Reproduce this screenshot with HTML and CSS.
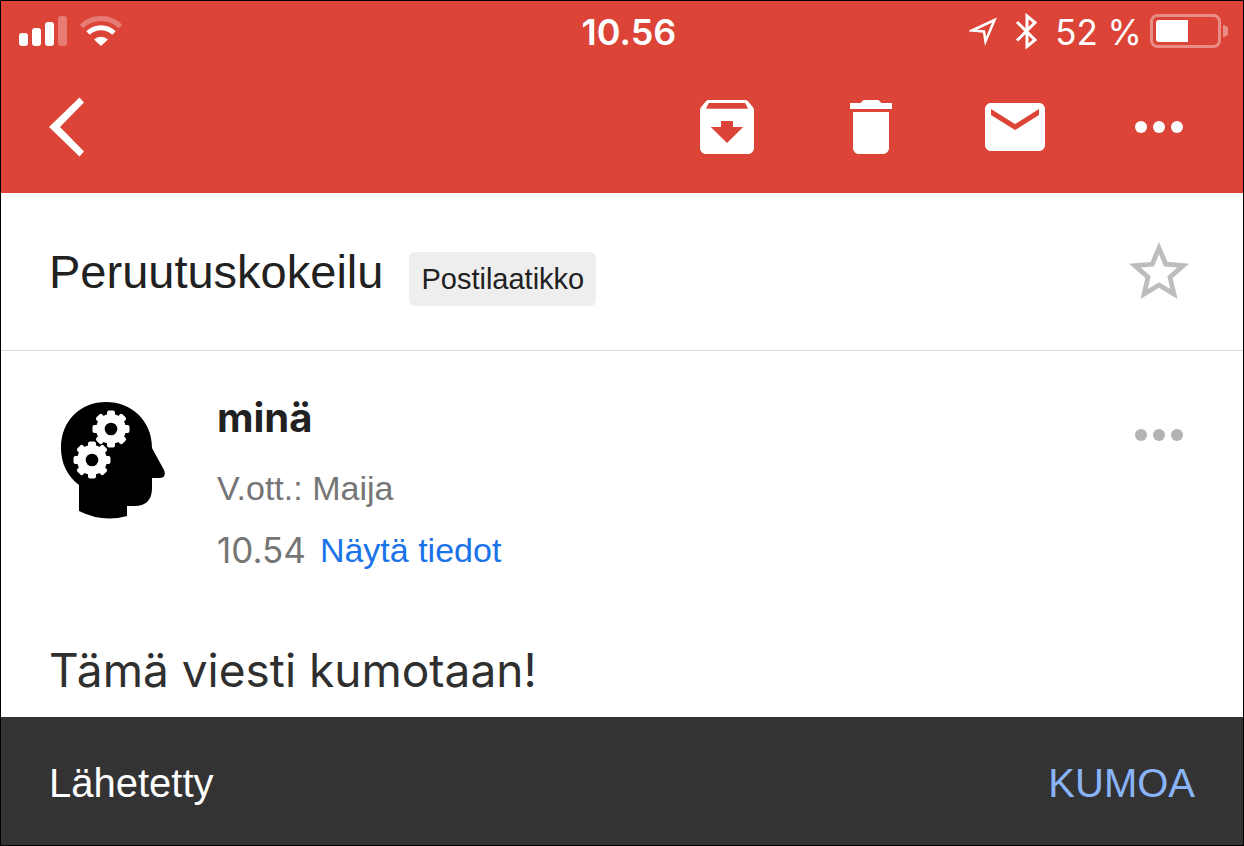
FILE: index.html
```html
<!DOCTYPE html>
<html lang="fi">
<head>
    <meta charset="UTF-8">
    <meta name="viewport" content="width=device-width, initial-scale=1.0">
    <title>Peruutuskokeilu</title>
    <link rel="stylesheet" href="styles.css">
</head>
<body>

    <header class="header">
        <!-- Phone status bar -->
        <div class="status-bar">
            <div class="status-left">
                <svg class="signal" width="50" height="32" viewBox="0 0 50 32" fill="#fff">
                    <rect x="1" y="18" width="9" height="13" rx="3"/>
                    <rect x="14" y="13" width="9" height="18" rx="3"/>
                    <rect x="27" y="7" width="9" height="24" rx="3"/>
                    <rect x="40" y="1" width="9" height="30" rx="3" opacity=".3"/>
                </svg>
                <svg class="wifi" width="42" height="32" viewBox="0 0 42 32">
                    <path d="M1.5 11.5a28 28 0 0 1 39 0" fill="none" stroke="#fff" stroke-width="5" opacity=".3"/>
                    <path d="M8 18a18.5 18.5 0 0 1 26 0" fill="none" stroke="#fff" stroke-width="5"/>
                    <path d="M21 31l-7-6.5a10 10 0 0 1 14 0z" fill="#fff"/>
                </svg>
            </div>
            <div class="clock">10.56</div>
            <div class="status-right">
                <svg width="30" height="36" viewBox="0 0 30 36">
                    <path d="M3 17.500L25.500 7 16.500 28.500 15 18.500z" fill="none" stroke="#fff" stroke-width="2.5"/>
                </svg>
                <svg width="24" height="36" viewBox="0 0 24 36">
                    <path d="M2 9l18 18-8 6.500V3l8 6.500-18 18" fill="none" stroke="#fff" stroke-width="3"/>
                </svg>
                <div class="battery">
                    <span>52 %</span>
                    <svg width="78" height="36" viewBox="0 0 78 36">
                        <rect x="1.500" y="2.500" width="68" height="31" rx="6" fill="none" stroke="#fff" stroke-width="3" opacity=".4"/>
                        <path d="M9 7h29v22H9a3 3 0 0 1-3-3V10a3 3 0 0 1 3-3z" fill="#fff"/>
                        <path d="M73 12a6 6 0 0 1 0 12z" fill="#fff" opacity=".4"/>
                    </svg>
                </div>
            </div>
        </div>

        <!-- Mail actions -->
        <nav class="toolbar">
            <button class="icon-button back" aria-label="Takaisin">
                <svg width="36" height="60" viewBox="0 0 36 60"><path d="M30.5 .5l4.500 5L11 30l24 24.500-4.500 5L0 30z" fill="currentColor"/></svg>
            </button>
            <div class="actions">
                <button class="icon-button" aria-label="Arkistoi">
                    <svg width="72" height="72" viewBox="0 0 24 24" fill="currentColor"><path d="M20.54 5.23l-1.39-1.68C18.88 3.21 18.47 3 18 3H6c-.47 0-.88.21-1.16.55L3.46 5.23C3.17 5.57 3 6.02 3 6.5V19c0 1.1.9 2 2 2h14c1.1 0 2-.9 2-2V6.5c0-.48-.17-.93-.46-1.27zM12 17.3L6.6 12H10v-2h4v2h3.4L12 17.3zM5 5.900L5.930 4h12.140L19 5.900z" fill-rule="evenodd"/></svg>
                </button>
                <button class="icon-button" aria-label="Poista">
                    <svg width="72" height="72" viewBox="0 0 24 24" fill="currentColor"><path d="M6 19c0 1.1.9 2 2 2h8c1.1 0 2-.9 2-2V7H6v12zM19 4h-3.5l-1-1h-5l-1 1H5v2h14V4z"/></svg>
                </button>
                <button class="icon-button" aria-label="Merkitse lukemattomaksi">
                    <svg width="72" height="72" viewBox="0 0 24 24" fill="currentColor"><path d="M20 4H4c-1.1 0-2 .9-2 2v12c0 1.1.9 2 2 2h16c1.1 0 2-.9 2-2V6c0-1.1-.9-2-2-2zm0 4l-8 5-8-5V6l8 5 8-5v2z"/></svg>
                </button>
                <button class="icon-button" aria-label="Lisää">
                    <svg width="72" height="72" viewBox="0 0 24 24" fill="currentColor"><circle cx="6" cy="12" r="2"/><circle cx="12" cy="12" r="2"/><circle cx="18" cy="12" r="2"/></svg>
                </button>
            </div>
        </nav>
    </header>

    <main class="content">
        <!-- Subject -->
        <section class="subject">
            <h1>Peruutuskokeilu</h1>
            <span class="label">Postilaatikko</span>
            <button class="icon-button star" aria-label="Lisää tähti">
                <svg width="72" height="72" viewBox="0 0 24 24" fill="currentColor"><path d="M22 9.24l-7.19-.62L12 2 9.19 8.63 2 9.24l5.46 4.73L5.82 21 12 17.27 18.18 21l-1.63-7.03L22 9.24zM12 15.4l-3.76 2.27 1-4.28-3.32-2.88 4.38-.38L12 6.1l1.71 4.04 4.38.38-3.32 2.88 1 4.28L12 15.4z"/></svg>
            </button>
        </section>

        <!-- Message -->
        <article class="message">
            <div class="message-header">
                <svg class="avatar" width="106" height="120" viewBox="0 0 106 120">
                    <defs>
                        <g id="gear">
                            <circle r="15"/>
                            <rect x="-4" y="-18.5" width="8" height="37" rx="2"/>
                            <rect x="-4" y="-18.5" width="8" height="37" rx="2" transform="rotate(45)"/>
                            <rect x="-4" y="-18.5" width="8" height="37" rx="2" transform="rotate(90)"/>
                            <rect x="-4" y="-18.5" width="8" height="37" rx="2" transform="rotate(135)"/>
                            <circle r="6.3" fill="#000"/>
                        </g>
                    </defs>
                    <path d="M19 85C7 76 1 63 1 48 1 20 21 2 46 2s46 18 46 46l12 22q3 8-5 8h-7v10q0 18-18 18h-7v10q-24 7-48-5z"/>
                    <use href="#gear" x="51" y="29" fill="#fff"/>
                    <use href="#gear" x="32" y="60" fill="#fff"/>
                </svg>
                <div class="sender">
                    <h2>minä</h2>
                    <p>V.ott.: Maija</p>
                    <p class="details"><time>10.54</time><a href="#">Näytä tiedot</a></p>
                </div>
                <button class="icon-button more" aria-label="Viestin toiminnot">
                    <svg width="72" height="72" viewBox="0 0 24 24" fill="currentColor"><circle cx="6" cy="12" r="2"/><circle cx="12" cy="12" r="2"/><circle cx="18" cy="12" r="2"/></svg>
                </button>
            </div>
            <p class="message-body">Tämä viesti kumotaan!</p>
        </article>
    </main>

    <!-- Undo bar -->
    <footer class="snackbar">
        <span>Lähetetty</span>
        <button class="undo">KUMOA</button>
    </footer>

</body>
</html>
```
FILE: styles.css
```css
* {
    box-sizing: border-box;
}

body {
    margin: 0;
    min-height: 100vh;
    display: flex;
    flex-direction: column;
    border: 1px solid #000;
    font-family: "Liberation Sans", Arial, sans-serif;
    background-color: #fff;
    color: #212121;
}

h1, h2, p {
    margin: 0;
}

svg {
    display: block;
    flex: none;
}

button {
    border: 0;
    padding: 0;
    background: none;
    font-family: inherit;
    color: inherit;
    cursor: pointer;
}

/* Header */
.header {
    background-color: #db4437;
    color: #fff;
}

.status-bar {
    display: grid;
    grid-template-columns: 1fr auto 1fr;
    align-items: center;
    height: 60px;
    padding: 0 15px 0 17px;
    font-family: Inter, sans-serif;
}

.status-left,
.status-right,
.battery {
    display: flex;
    align-items: center;
}

.status-left {
    gap: 12px;
}

.status-right {
    justify-content: flex-end;
    gap: 16px;
}

.clock {
    padding: 2px 0 0 12px;
    font-size: 36px;
    font-weight: 600;
}

.battery {
    gap: 8px;
    font-size: 35px;
}

.battery span {
    padding-top: 2px;
}

.toolbar {
    display: flex;
    justify-content: space-between;
    align-items: center;
    height: 132px;
    padding: 0 48px;
}

.actions {
    display: flex;
    gap: 72px;
}

/* Subject row */
.subject {
    display: flex;
    align-items: center;
    height: 158px;
    padding: 0 48px;
    border-bottom: 1px solid #dadada;
}

.subject h1 {
    font-size: 47px;
    font-weight: 400;
}

.label {
    margin: 14px 0 0 26px;
    padding: 0 12px;
    border-radius: 6px;
    background-color: #eee;
    font-size: 29px;
    line-height: 54px;
}

.star {
    margin-left: auto;
    color: #bdbdbd;
}

/* Message */
.message {
    padding: 36px 48px 0;
}

.message-header {
    display: flex;
    align-items: flex-start;
}

.avatar {
    margin: 13px 51px 0 11px;
}

.sender {
    flex: 1;
    color: #757575;
    font-size: 34px;
    line-height: 62px;
}

.sender h2 {
    margin-bottom: 8px;
    color: #212121;
    font-family: Inter, sans-serif;
    font-size: 40px;
    font-weight: 700;
}

.details {
    display: flex;
    gap: 14px;
}

.details time {
    font-family: Inter, sans-serif;
    font-size: 35px;
}

.details a {
    color: #1a73e8;
    text-decoration: none;
}

.more {
    margin-top: 12px;
    color: #b3b3b3;
}

.message-body {
    margin-top: 58px;
    color: #2f2f2f;
    font-family: Inter, sans-serif;
    font-size: 46px;
    line-height: 62px;
}

/* Undo bar */
.snackbar {
    display: flex;
    justify-content: space-between;
    align-items: center;
    height: 128px;
    margin-top: auto;
    padding: 4px 48px 0;
    background-color: #333;
    color: #fff;
    font-size: 40px;
}

.undo {
    color: #8ab4f8;
    font-size: 40px;
}
```
